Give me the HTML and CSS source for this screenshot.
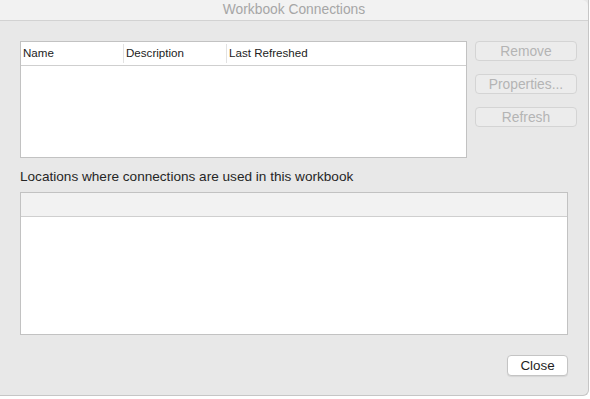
FILE: index.html
```html
<!DOCTYPE html>
<html lang="en">
<head>
    <meta charset="UTF-8">
    <title>Workbook Connections</title>
    <link rel="stylesheet" href="styles.css">
</head>
<body>
    <div class="window">
        <!-- Title bar -->
        <div class="titlebar">Workbook Connections</div>

        <div class="content">
            <!-- Connections list + buttons -->
            <div class="top-row">
                <div class="list conn-list">
                    <div class="list-head">
                        <div class="col col-name">Name</div>
                        <div class="col col-desc">Description</div>
                        <div class="col col-last">Last Refreshed</div>
                    </div>
                </div>
                <div class="side-buttons">
                    <button class="btn" disabled>Remove</button>
                    <button class="btn" disabled>Properties...</button>
                    <button class="btn" disabled>Refresh</button>
                </div>
            </div>

            <div class="label">Locations where connections are used in this workbook</div>

            <!-- Locations list -->
            <div class="list loc-list">
                <div class="list-head grey"></div>
            </div>

            <div class="footer">
                <button class="btn close-btn">Close</button>
            </div>
        </div>
    </div>
    <div class="sheet-strip"></div>
</body>
</html>
```

FILE: styles.css
```css
/* General */
body {
    margin: 0;
    width: 590px;
    height: 399px;
    background: #ffffff;
    font-family: "Liberation Sans", Arial, sans-serif;
    overflow: hidden;
}

/* Dialog window */
.window {
    width: 588px;
    height: 395px;
    background: #e8e8e8;
    border-right: 1px solid #c6c6c6;
    border-bottom: 1px solid #c6c6c6;
    border-bottom-right-radius: 6px;
    display: flex;
    flex-direction: column;
}

.titlebar {
    height: 20px;
    line-height: 20px;
    background: #f2f2f2;
    border-bottom: 1px solid #d2d2d2;
    border-top-right-radius: 6px;
    text-align: center;
    font-size: 13.8px;
    color: #a6a6a6;
}

.content {
    padding: 20px 20px 0 20px;
}

/* Top row */
.top-row {
    display: flex;
    gap: 8px;
}

.list {
    background: #ffffff;
    border: 1px solid #c2c2c2;
    box-sizing: border-box;
}

.conn-list {
    flex: none;
    width: 447px;
    height: 117px;
}

.list-head {
    display: flex;
    height: 24px;
    border-bottom: 1px solid #cfcfcf;
    box-sizing: border-box;
}

.list-head.grey {
    background: #f2f2f2;
}

.col {
    font-size: 11.6px;
    color: #222;
    padding-left: 2px;
    margin: 2px 0;
    line-height: 18px;
    box-sizing: border-box;
}

.col-name,
.col-desc {
    width: 103px;
    border-right: 1px solid #e2e2e2;
}

/* Buttons */
.side-buttons {
    flex: none;
    display: flex;
    flex-direction: column;
    gap: 13px;
}

.btn {
    width: 102px;
    height: 20px;
    padding: 0;
    font-family: "Liberation Sans", Arial, sans-serif;
    font-size: 13.8px;
    color: #b4b4b4;
    background: #ececec;
    border: 1px solid #d4d4d4;
    border-radius: 4px;
}

.label {
    font-size: 13.6px;
    color: #262626;
    margin: 11px 0 8px 0;
    height: 15px;
    line-height: 15px;
}

.loc-list {
    width: 548px;
    height: 143px;
}

.footer {
    display: flex;
    justify-content: flex-end;
    margin-top: 20px;
}

.close-btn {
    width: 61px;
    height: 21px;
    font-size: 13.4px;
    color: #1e1e1e;
    background: #ffffff;
    border: 1px solid #c4c4c4;
    box-shadow: 0 1px 1px rgba(0, 0, 0, 0.08);
}

/* Spreadsheet peeking below */
.sheet-strip {
    height: 3px;
    background: #ffffff;
}
```
